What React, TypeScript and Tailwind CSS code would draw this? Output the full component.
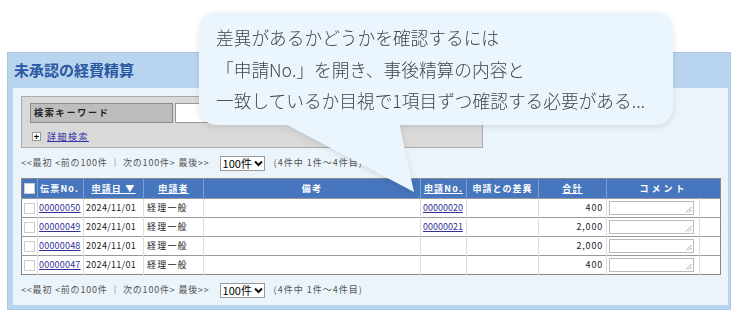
import React from 'react';

const rows = [
  { no: '00000050', date: '2024/11/01', user: '経理一般', apply: '00000020', total: '400' },
  { no: '00000049', date: '2024/11/01', user: '経理一般', apply: '00000021', total: '2,000' },
  { no: '00000048', date: '2024/11/01', user: '経理一般', apply: '', total: '2,000' },
  { no: '00000047', date: '2024/11/01', user: '経理一般', apply: '', total: '400' },
];

function Pager() {
  return (
    <div className="flex items-center h-[16px] text-[9px] text-[#555] tracking-[0.8px]">
      <span>&lt;&lt;最初 &lt;前の100件 ｜ 次の100件&gt; 最後&gt;&gt;</span>
      <div className="ml-[10px] w-[45px] h-[15px] bg-white border border-[#999] flex items-center pl-[2px] text-[11px] text-black tracking-normal">
        100件
        <svg className="ml-[2px]" width="9" height="7" viewBox="0 0 9 7">
          <path d="M1 1.5 L4.5 5 L8 1.5" fill="none" stroke="#111" strokeWidth="2" />
        </svg>
      </div>
      <span className="ml-[9px] tracking-[1px]">(4件中 1件～4件目)</span>
    </div>
  );
}

function Comment() {
  return (
    <div className="relative w-[85px] h-[14px] bg-white border border-[#bbb]">
      <svg className="absolute right-[1px] bottom-[1px]" width="7" height="7" viewBox="0 0 7 7">
        <path d="M6.5 1 L1 6.5 M6.5 4 L4 6.5" stroke="#888" strokeWidth="0.8" />
      </svg>
    </div>
  );
}

export default function App() {
  return (
    <div className="relative w-[738px] h-[312px] bg-white overflow-hidden font-['Noto_Sans_CJK_JP',sans-serif]">
      <div className="pt-[52px] pl-[7px]">
        <div className="w-[724px] bg-[#b9d4ee] border border-[#aac8e6] pl-[5px] pr-[2px] pb-[4px]">
          <div className="h-[35px] flex items-center pl-[1px] text-[15px] font-bold text-[#2a58a4]">未承認の経費精算</div>
          <div className="bg-[#ebf3fb] pl-[8px] pt-[8px] pb-[7px]">
            <div className="w-[462px] h-[52px] bg-[#d9d9d9] border border-[#aaa] pl-[8px] pt-[6px]">
              <div className="flex">
                <div className="w-[143px] h-[20px] bg-[#bdbdbd] border border-[#8a8a8a] flex items-center pl-[3px] text-[9px] font-bold text-[#222] tracking-[1.8px]">
                  検索キーワード
                </div>
                <div className="ml-[2px] w-[160px] h-[20px] bg-white border border-[#999]" />
              </div>
              <div className="flex items-center mt-[7px] pl-[2px]">
                <div className="w-[9px] h-[9px] bg-white border border-[#999] flex items-center justify-center text-[9px] font-bold leading-none text-black">+</div>
                <span className="ml-[6px] text-[9px] text-[#3636a8] underline tracking-[1.5px]">詳細検索</span>
              </div>
            </div>
            <div className="mt-[7px]">
              <Pager />
            </div>
            <table className="mt-[7px] w-[699px] border-collapse table-fixed border border-[#888] text-[9px] text-[#222]">
              <colgroup>
                <col className="w-[16px]" />
                <col className="w-[46px]" />
                <col className="w-[60px]" />
                <col className="w-[60px]" />
                <col className="w-[217px]" />
                <col className="w-[46px]" />
                <col className="w-[72px]" />
                <col className="w-[68px]" />
                <col className="w-[93px]" />
                <col className="w-[21px]" />
              </colgroup>
              <thead>
                <tr className="h-[20px] bg-[#4676bd] text-white font-bold text-[9px] tracking-[1.2px]">
                  <th className="border-r border-[#7a9fd3] p-0">
                    <div className="w-[11px] h-[11px] bg-white border border-[#ccc] mx-auto" />
                  </th>
                  <th className="border-r border-[#7a9fd3] p-0 text-left pl-[2px]">伝票No.</th>
                  <th className="border-r border-[#7a9fd3] p-0">
                    <span className="underline">申請日 ▼</span>
                  </th>
                  <th className="border-r border-[#7a9fd3] p-0">
                    <span className="underline">申請者</span>
                  </th>
                  <th className="border-r border-[#7a9fd3] p-0">備考</th>
                  <th className="border-r border-[#7a9fd3] p-0">
                    <span className="underline">申請No.</span>
                  </th>
                  <th className="border-r border-[#7a9fd3] p-0 tracking-[1px]">申請との差異</th>
                  <th className="border-r border-[#7a9fd3] p-0">
                    <span className="underline">合計</span>
                  </th>
                  <th colSpan={2} className="p-0 tracking-[3px]">コメント</th>
                </tr>
              </thead>
              <tbody className="bg-white">
                {rows.map((r) => (
                  <tr key={r.no} className="h-[19px] border-t border-[#999]">
                    <td className="border-r border-[#ddd] p-0">
                      <div className="w-[11px] h-[11px] border border-[#ccc] mx-auto" />
                    </td>
                    <td className="border-r border-[#ddd] p-0 pl-[1px]">
                      <span className="text-[#30309a] underline tracking-[0.2px]">{r.no}</span>
                    </td>
                    <td className="border-r border-[#ddd] p-0 pl-[2px] tracking-[0.3px]">{r.date}</td>
                    <td className="border-r border-[#ddd] p-0 pl-[3px] tracking-[1.2px]">{r.user}</td>
                    <td className="border-r border-[#ddd] p-0" />
                    <td className="border-r border-[#ddd] p-0 pl-[2px]">
                      {r.apply && <span className="text-[#30309a] underline">{r.apply}</span>}
                    </td>
                    <td className="border-r border-[#ddd] p-0" />
                    <td className="border-r border-[#ddd] p-0 pr-[3px] text-right tracking-[0.8px]">{r.total}</td>
                    <td className="border-r border-[#ddd] p-0 pl-[2px]">
                      <Comment />
                    </td>
                    <td className="p-0" />
                  </tr>
                ))}
              </tbody>
            </table>
            <div className="mt-[7px]">
              <Pager />
            </div>
          </div>
        </div>
      </div>

      <div className="absolute left-0 top-0 drop-shadow-[0_2px_3px_rgba(0,0,0,0.1)]">
        <svg className="absolute left-0 top-0" width="738" height="312" viewBox="0 0 738 312">
          <polygon points="274,118 398,118 414,192" fill="#ebf5fe" />
        </svg>
        <div className="absolute left-[199px] top-[12px] w-[474px] h-[113px] rounded-[18px] bg-[#ebf5fe] pl-[17px] pt-[10px] text-[17.7px] font-light leading-[31.5px] text-[#444]">
          <div>差異があるかどうかを確認するには</div>
          <div>「申請No.」を開き、事後精算の内容と</div>
          <div>一致しているか目視で1項目ずつ確認する必要がある...</div>
        </div>
      </div>
    </div>
  );
}
